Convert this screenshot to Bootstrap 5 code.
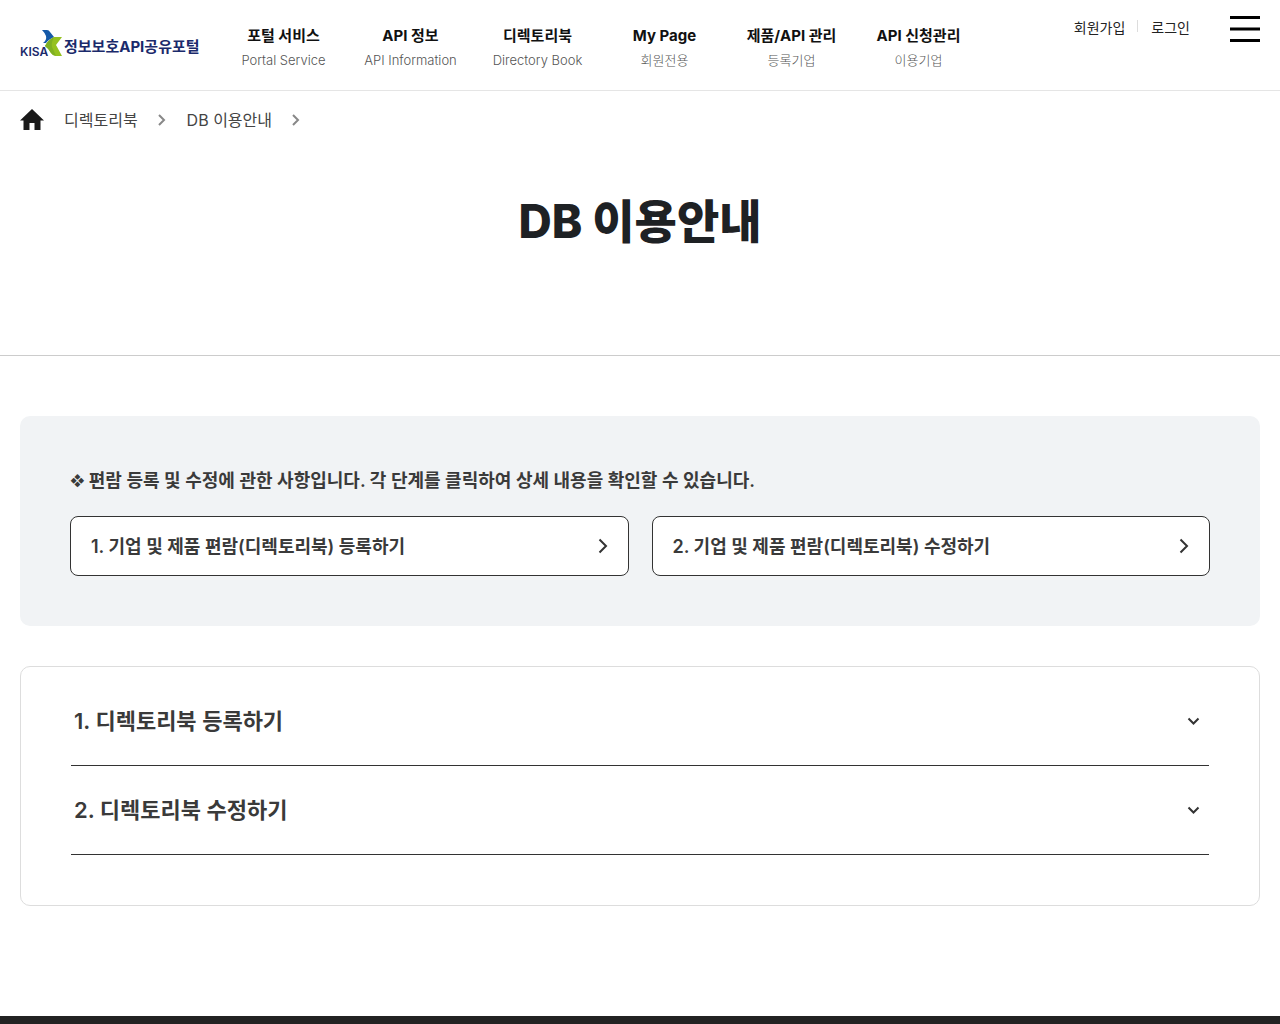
<!DOCTYPE html>
<html lang="ko">
<head>
<meta charset="utf-8">
<meta name="viewport" content="width=device-width, initial-scale=1">
<title>DB 이용안내 - 정보보호API공유포털</title>
<link href="https://cdn.jsdelivr.net/npm/bootstrap@5.3.0/dist/css/bootstrap.min.css" rel="stylesheet">
<style>
  body { font-family: Inter, "Noto Sans CJK KR", sans-serif; color: #222; background: #fff; }
  a { color: inherit; text-decoration: none; }
  .page-gutter { padding-left: 20px; padding-right: 20px; }
  .site-header { height: 91px; border-bottom: 1px solid #e5e5e5; }
  .brand-text { font-size: 15px; line-height: 20px; font-weight: 700; color: #1b2a6b; padding-top: 8px; }
  .brand-mark { font-size: 12px; font-weight: 600; }
  .brand-link { width: 180px; margin-top: 29px; }
  .gnb { padding-top: 23px; margin-left: 20px; }
  .gnb-item { width: 127px; text-align: center; white-space: nowrap; }
  .gnb-item strong { display: block; font-size: 15px; line-height: 25px; font-weight: 700; color: #111; }
  .gnb-item span { display: block; font-size: 13px; line-height: 24px; font-weight: 300; color: #555; }
  .util { margin-top: 16px; font-size: 14px; line-height: 24px; color: #222; }
  .util-bar { width: 1px; height: 12px; background: #ddd; margin: 4px 13px 0 12px; }
  .menu-btn { width: 30px; margin-left: 40px; line-height: 0; }
  .crumbs { height: 58px; font-size: 16px; color: #444; }
  .crumb-home { margin-right: 20px; }
  .crumb-arrow { margin: 0 21px 0 20px; }
  .page-head { height: 265px; border-bottom: 1px solid #ccc; }
  .page-title { font-size: 46px; line-height: 60px; font-weight: 800; color: #1e2124; margin: 42px 0 0; }
  .guide { background: #f1f3f5; border-radius: 10px; margin-top: 60px; padding: 50px; }
  .guide-note { font-size: 18px; line-height: 30px; font-weight: 600; color: #3a3a3a; margin-bottom: 20px; }
  .note-mark { font-size: 14px; margin-right: 4px; }
  .guide-grid { --bs-gutter-x: 23px; }
  .step-link { height: 60px; padding: 0 20px; border: 1px solid #333; border-radius: 8px; background: #fff; font-size: 18px; font-weight: 600; color: #3a3a3a; }
  .steps { border: 1px solid #ddd; border-radius: 10px; margin-top: 40px; padding: 10px 50px 50px; }
  .step-toggle { height: 89px; padding: 0 9px 0 3px; border: 0; border-bottom: 1px solid #333; background: none; font-size: 22px; font-weight: 600; color: #3a3a3a; text-align: left; }
  .site-footer { height: 8px; background: #222; margin-top: 110px; }
</style>
</head>
<body>
<header class="site-header page-gutter d-flex align-items-start">
  <a href="#" class="brand-link d-flex align-items-start flex-shrink-0">
    <svg width="44" height="34" viewBox="0 0 44 34" class="flex-shrink-0">
      <path d="M22 1h5q2 0 3 2l4 5q-6 3-8 6h-3q4-3 3-7-1-3-4-6z" fill="#1459a8"/>
      <path d="M34 8h8l-6 8 6 11h-6q-3 0-5-3-3-5-6-7 3-6 9-9z" fill="#95c11f"/>
      <path d="M25 17q3-6 9-9-3 6-2 10l4 9q-3 0-5-3-3-5-6-7z" fill="#7fb022"/>
      <text class="brand-mark" x="0" y="27" fill="#1b2a6b">KISA</text>
    </svg>
    <span class="brand-text text-nowrap">정보보호API공유포털</span>
  </a>
  <nav class="gnb d-flex flex-shrink-0" aria-label="주 메뉴">
    <a class="gnb-item" href="#"><strong>포털 서비스</strong><span>Portal Service</span></a>
    <a class="gnb-item" href="#"><strong>API 정보</strong><span>API Information</span></a>
    <a class="gnb-item" href="#"><strong>디렉토리북</strong><span>Directory Book</span></a>
    <a class="gnb-item" href="#"><strong>My Page</strong><span>회원전용</span></a>
    <a class="gnb-item" href="#"><strong>제품/API 관리</strong><span>등록기업</span></a>
    <a class="gnb-item" href="#"><strong>API 신청관리</strong><span>이용기업</span></a>
  </nav>
  <div class="util d-flex align-items-start ms-auto text-nowrap">
    <a href="#">회원가입</a><span class="util-bar"></span><a href="#">로그인</a>
    <button type="button" class="menu-btn border-0 bg-transparent p-0" aria-label="전체 메뉴">
      <svg width="30" height="26" viewBox="0 0 30 26"><path d="M0 1.500h30M0 13h30M0 24.500h30" stroke="#000" stroke-width="3"/></svg>
    </button>
  </div>
</header>
<main>
  <div class="page-head">
    <nav class="crumbs page-gutter d-flex align-items-center" aria-label="현재 위치">
      <a href="#" class="crumb-home d-flex" aria-label="홈"><svg width="24" height="22" viewBox="0 0 24 22"><path d="M12 0l12 11.500h-3.500V21h-6v-7h-5v7h-6v-9.500H0z" fill="#1a1a1a"/></svg></a>
      <a href="#">디렉토리북</a>
      <svg class="crumb-arrow" width="8" height="12" viewBox="0 0 8 12"><path d="M1 1l5 5-5 5" fill="none" stroke="#888" stroke-width="2"/></svg>
      <a href="#">DB 이용안내</a>
      <svg class="crumb-arrow" width="8" height="12" viewBox="0 0 8 12"><path d="M1 1l5 5-5 5" fill="none" stroke="#888" stroke-width="2"/></svg>
    </nav>
    <h1 class="page-title text-center">DB 이용안내</h1>
  </div>
  <div class="page-gutter">
    <section class="guide">
      <p class="guide-note d-flex align-items-center"><span class="note-mark">❖</span><span>편람 등록 및 수정에 관한 사항입니다. 각 단계를 클릭하여 상세 내용을 확인할 수 있습니다.</span></p>
      <div class="row guide-grid">
        <div class="col-6"><a href="#step1" class="step-link d-flex align-items-center justify-content-between">1. 기업 및 제품 편람(디렉토리북) 등록하기
          <svg width="10" height="16" viewBox="0 0 10 16"><path d="M1.500 1.500L8 8l-6.500 6.500" fill="none" stroke="#333" stroke-width="2"/></svg></a></div>
        <div class="col-6"><a href="#step2" class="step-link d-flex align-items-center justify-content-between">2. 기업 및 제품 편람(디렉토리북) 수정하기
          <svg width="10" height="16" viewBox="0 0 10 16"><path d="M1.500 1.500L8 8l-6.500 6.500" fill="none" stroke="#333" stroke-width="2"/></svg></a></div>
      </div>
    </section>
    <section class="steps">
      <button type="button" id="step1" class="step-toggle w-100 d-flex align-items-center justify-content-between" aria-expanded="false">1. 디렉토리북 등록하기
        <svg width="13" height="9" viewBox="0 0 13 9"><path d="M1.500 1.500l5 5 5-5" fill="none" stroke="#333" stroke-width="2"/></svg></button>
      <button type="button" id="step2" class="step-toggle w-100 d-flex align-items-center justify-content-between" aria-expanded="false">2. 디렉토리북 수정하기
        <svg width="13" height="9" viewBox="0 0 13 9"><path d="M1.500 1.500l5 5 5-5" fill="none" stroke="#333" stroke-width="2"/></svg></button>
    </section>
  </div>
</main>
<footer class="site-footer"></footer>
<script src="https://cdn.jsdelivr.net/npm/bootstrap@5.3.0/dist/js/bootstrap.bundle.min.js"></script>
</body>
</html>
